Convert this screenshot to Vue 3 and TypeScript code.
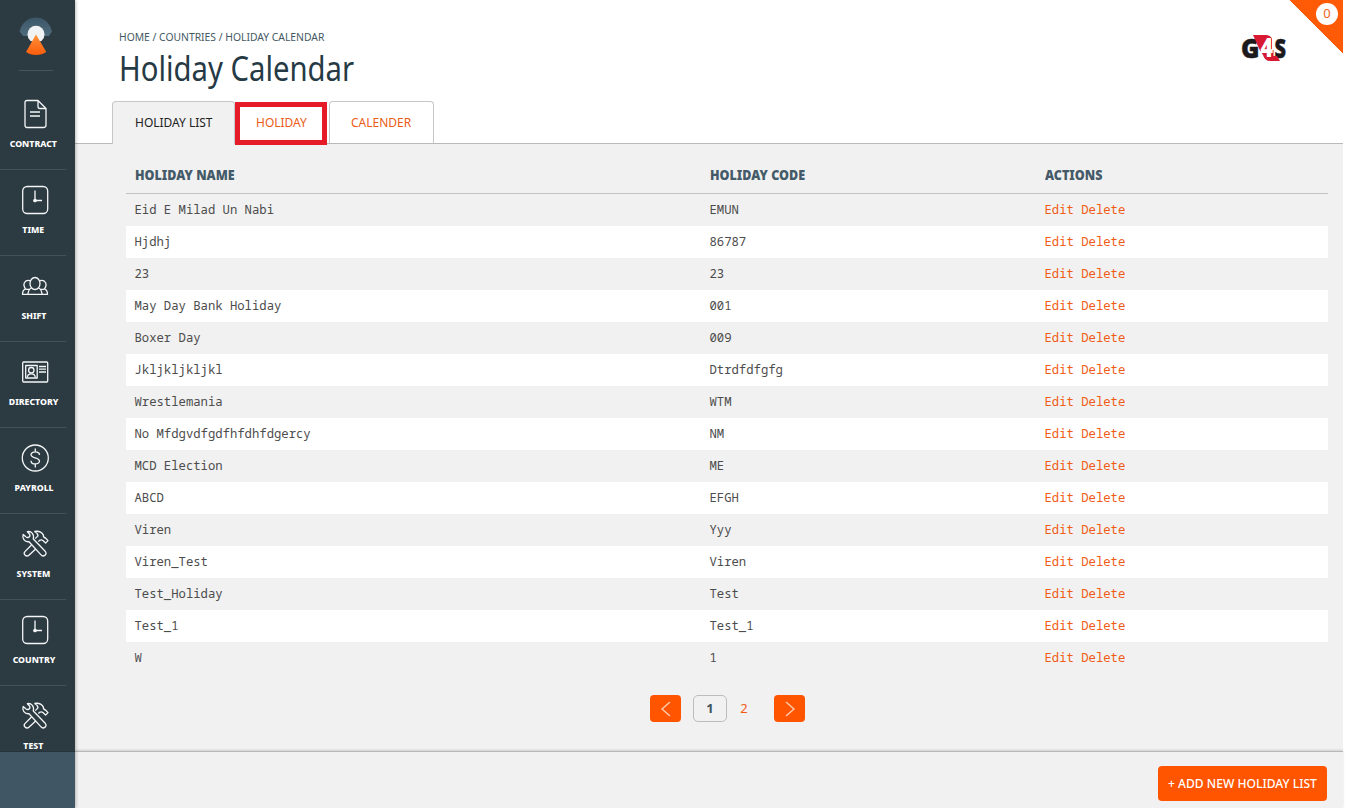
<script setup lang="ts">
interface NavItem {
  label: string
  icon: 'contract' | 'clock' | 'people' | 'card' | 'dollar' | 'tools'
}

interface Holiday {
  name: string
  code: string
}

const navItems: NavItem[] = [
  { label: 'CONTRACT', icon: 'contract' },
  { label: 'TIME', icon: 'clock' },
  { label: 'SHIFT', icon: 'people' },
  { label: 'DIRECTORY', icon: 'card' },
  { label: 'PAYROLL', icon: 'dollar' },
  { label: 'SYSTEM', icon: 'tools' },
  { label: 'COUNTRY', icon: 'clock' },
  { label: 'TEST', icon: 'tools' },
]

const holidays: Holiday[] = [
  { name: 'Eid E Milad Un Nabi', code: 'EMUN' },
  { name: 'Hjdhj', code: '86787' },
  { name: '23', code: '23' },
  { name: 'May Day Bank Holiday', code: '001' },
  { name: 'Boxer Day', code: '009' },
  { name: 'Jkljkljkljkl', code: 'Dtrdfdfgfg' },
  { name: 'Wrestlemania', code: 'WTM' },
  { name: 'No Mfdgvdfgdfhfdhfdgercy', code: 'NM' },
  { name: 'MCD Election', code: 'ME' },
  { name: 'ABCD', code: 'EFGH' },
  { name: 'Viren', code: 'Yyy' },
  { name: 'Viren_Test', code: 'Viren' },
  { name: 'Test_Holiday', code: 'Test' },
  { name: 'Test_1', code: 'Test_1' },
  { name: 'W', code: '1' },
]
</script>

<template>
  <div class="page">
    <aside class="sidebar">
      <div class="brand">
        <svg class="brand-mark" width="34" height="40" viewBox="0 0 34 40">
          <defs>
            <linearGradient id="dome" x1="0" y1="0" x2="0" y2="1">
              <stop offset="0" stop-color="#3b5668" />
              <stop offset="1" stop-color="#4f6c7d" />
            </linearGradient>
            <linearGradient id="beam" x1="0" y1="0" x2="0" y2="1">
              <stop offset="0" stop-color="#ff9238" />
              <stop offset="1" stop-color="#fb5c0c" />
            </linearGradient>
          </defs>
          <path d="M4.200 20L.5 15.500C3 6 9.500 1.500 17 1.500S30.500 6 33 15.500L29.800 20Z" fill="url(#dome)" />
          <circle cx="17" cy="18.300" r="8.500" fill="#f1f2f3" />
          <path d="M17 18.500L27.300 36Q23 39 17 39T7 36Z" fill="url(#beam)" />
        </svg>
      </div>
      <nav>
        <a v-for="item in navItems" :key="item.label" class="nav-item">
          <svg class="nav-icon" width="30" height="32" viewBox="0 0 30 32">
            <template v-if="item.icon === 'contract'">
              <path d="M7 2.500H18L26 10.500V27Q26 29.500 23.500 29.500H7Q5 29.500 5 27V4.500Q5 2.500 7 2.500ZM18 2.500V8.500Q18 10.500 20 10.500H26M10 14H20M10 18H20" />
            </template>
            <template v-else-if="item.icon === 'clock'">
              <rect x="2.700" y="2.500" width="25" height="27" rx="4.500" />
              <path d="M15 6.500V16.500H22" />
              <circle cx="15" cy="16.500" r="1.200" class="solid" />
            </template>
            <template v-else-if="item.icon === 'people'">
              <ellipse cx="15" cy="13.500" rx="5" ry="6" />
              <path d="M11.500 18Q8.200 19.500 8 24.300H22Q21.800 19.500 18.500 18" />
              <path d="M10 10.700C5 9.500 2 14 5.500 18.800Q2.500 20 2.500 24.300H8M20 10.700C25 9.500 28 14 24.500 18.800Q27.500 20 27.500 24.300H22M5.500 18.800Q7.500 19.800 9.500 19.200M24.500 18.800Q22.500 19.800 20.500 19.200" />
            </template>
            <template v-else-if="item.icon === 'card'">
              <rect x="2.700" y="6" width="25" height="20" rx="1" />
              <rect x="5.700" y="9.500" width="11.500" height="12.500" />
              <circle cx="11.300" cy="14.200" r="2.700" />
              <path d="M7.300 21.500Q7.500 17.800 11.300 17.800T15.300 21.500M19 10.500H26M19 13.200H26M19 16H26" />
            </template>
            <template v-else-if="item.icon === 'dollar'">
              <circle cx="15.300" cy="16" r="13" />
              <path d="M15.300 6.500V10M15.300 22V25.500M19.500 13C19.500 9 11 9 11 12.700C11 16.500 19.500 15 19.500 19C19.500 23 11 23 11 18.700" />
            </template>
            <template v-else>
              <path d="M7.400 3.700L9.700 6.200Q10.500 8.300 8.700 9.300Q6.500 10 5.500 8.500L3.200 6.400C1.800 9.800 4.500 14.300 9 13.700L20.800 26.600Q22.600 29 24.800 27.400Q27.100 25.500 25.200 23.300L13.300 11C14.400 5.800 11.100 2.800 7.400 3.700Z" />
              <path d="M14.300 3.500Q20.500 2.300 23.300 6.800Q23 9.500 25.500 10L28 12.600L25.600 15.100L22.900 12.600Q21.500 11.300 19.500 12.400L18.400 13.700M15.200 10.600L18 7.900Q17.800 4.900 14.300 3.500M11.500 17L4.900 23.600Q3.400 25.300 5 27Q7 29 8.900 27.200L15.700 20.900" />
            </template>
          </svg>
          <span class="nav-label">{{ item.label }}</span>
        </a>
      </nav>
      <div class="sidebar-foot"></div>
    </aside>

    <main class="main">
      <header class="header">
        <div class="heading">
          <div class="crumbs"><span>HOME / COUNTRIES / HOLIDAY CALENDAR</span></div>
          <h1><span>Holiday Calendar</span></h1>
        </div>
        <svg class="company" width="46" height="28" viewBox="0 0 46 28">
          <text x="0" y="23.500" textLength="18.500" lengthAdjust="spacingAndGlyphs" class="mark">G</text>
          <text x="33.500" y="23.500" textLength="11.500" lengthAdjust="spacingAndGlyphs" class="mark">S</text>
          <path d="M12 1H25Q29 1 31 4.500V16H32.500V22H36L39 27H29Q24 27 22 21L18.500 15.500Z" fill="#d71932" />
          <text x="19.500" y="22.500" textLength="12.500" lengthAdjust="spacingAndGlyphs" class="mark four">4</text>
        </svg>
        <div class="corner"><span class="count">0</span></div>
        <div class="tabs">
          <a class="tab active"><span>HOLIDAY LIST</span></a>
          <a class="tab marked"><span>HOLIDAY</span></a>
          <a class="tab last"><span>CALENDER</span></a>
        </div>
      </header>

      <section class="content">
        <div class="row head">
          <span><b>HOLIDAY NAME</b></span>
          <span><b>HOLIDAY CODE</b></span>
          <span><b>ACTIONS</b></span>
        </div>
        <div v-for="holiday in holidays" :key="holiday.name" class="row">
          <span>{{ holiday.name }}</span>
          <span>{{ holiday.code }}</span>
          <span class="actions"><a>Edit</a> <a>Delete</a></span>
        </div>
        <div class="pager">
          <button class="arrow">
            <svg width="12" height="18" viewBox="0 0 12 18"><path d="M10 2L2 9L10 16" /></svg>
          </button>
          <span class="current">1</span>
          <a class="next-page">2</a>
          <button class="arrow">
            <svg width="12" height="18" viewBox="0 0 12 18"><path d="M2 2L10 9L2 16" /></svg>
          </button>
        </div>
      </section>

      <footer class="footer">
        <button class="add"><span>+ ADD NEW HOLIDAY LIST</span></button>
      </footer>
    </main>
  </div>
</template>

<style>
body {
  margin: 0;
  overflow: hidden;
  background: #fff;
}
</style>

<style scoped>
* {
  box-sizing: border-box;
}

.page {
  display: flex;
  width: 1345px;
  height: 808px;
  font-family: "Noto Sans", "Open Sans", sans-serif;
  color: #263a45;
}

.sidebar {
  display: flex;
  flex-direction: column;
  width: 75px;
  height: 808px;
  background: #2c3a42;
  box-shadow: 1px 0 3px rgba(0, 0, 0, 0.250);
  z-index: 2;
  overflow: hidden;
}

.brand {
  flex: none;
  width: 34px;
  height: 71px;
  margin-left: 18.500px;
  padding-top: 16px;
  border-bottom: 1px solid #46545c;
}

.brand-mark {
  display: block;
}

nav {
  height: 680px;
  padding-top: 13px;
  overflow: hidden;
}

.nav-item {
  display: flex;
  flex-direction: column;
  align-items: center;
  width: 66px;
  height: 86px;
  padding-top: 14px;
  padding-left: 1px;
  border-bottom: 1px solid #42515a;
}

.nav-icon {
  flex: none;
  margin-left: 3px;
  fill: none;
  stroke: #f4f6f7;
  stroke-width: 1.300;
  stroke-linejoin: round;
}

.nav-icon .solid {
  fill: #fff;
}

.nav-label {
  margin-top: 7px;
  margin-left: 0.500px;
  font-size: 9px;
  line-height: 14px;
  font-weight: 800;
  color: #fff;
  transform: scaleX(0.970);
}

.sidebar-foot {
  flex: none;
  height: 57px;
  background: #405665;
  border-top: 1px solid #26333a;
}

.main {
  display: flex;
  flex-direction: column;
  width: 1268px;
  background: #f1f1f1;
}

.header {
  position: relative;
  height: 144px;
  background: #fff;
  border-bottom: 1px solid #b9b9b9;
}

.heading {
  padding: 29px 0 0 44px;
}

.crumbs {
  height: 16px;
  font-size: 11px;
  line-height: 16px;
  color: #455963;
}

.crumbs span {
  transform: scaleX(0.940);
}

h1 {
  margin: 0;
  height: 46px;
  font-size: 34px;
  line-height: 46px;
  font-weight: 400;
}

h1 span {
  transform: scaleX(0.861);
}

h1 span,
.crumbs span,
.tab span,
.row b,
.add span {
  display: inline-block;
  white-space: nowrap;
  transform-origin: 0 50%;
}

.tab span {
  transform: scaleX(0.922);
}

.company {
  position: absolute;
  left: 1166px;
  top: 34px;
  overflow: visible;
}

.mark {
  font: 800 27px "Open Sans", sans-serif;
  fill: #1b191b;
  stroke: #1b191b;
  stroke-width: 0.500;
}

.mark.four {
  fill: #fff;
  stroke: none;
}

.corner {
  position: absolute;
  top: 0;
  right: 0;
  width: 53px;
  height: 53px;
  background: linear-gradient(45deg, transparent 50%, #ff5a05 50%);
}

.count {
  position: absolute;
  top: 3px;
  right: 5px;
  width: 22px;
  height: 22px;
  border-radius: 50%;
  background: #fff;
  color: #f06420;
  font-size: 13px;
  line-height: 21px;
  text-align: center;
}

.tabs {
  display: flex;
  height: 43px;
  margin: 10px 0 0 37px;
}

.tab {
  height: 42px;
  border: 1px solid #c7c7c7;
  border-bottom: 0;
  border-radius: 4px 4px 0 0;
  font-size: 13px;
  line-height: 40px;
  color: #ec5c16;
  background: #fff;
}

.active {
  width: 123px;
  height: 43px;
  padding-left: 21.500px;
  color: #222;
  background: #f1f1f1;
}

.marked {
  width: 92px;
  height: 43px;
  margin-top: 1px;
  padding-left: 16px;
  border: 5px solid #e51c28;
  border-radius: 0;
  line-height: 30px;
  z-index: 1;
}

.last {
  width: 105px;
  margin-left: 2px;
  padding-left: 21px;
}

.content {
  height: 607px;
  padding: 12px 15px 0 51px;
}

.row {
  display: grid;
  grid-template-columns: 575px 335px 1fr;
  height: 32px;
  padding-left: 8.500px;
  line-height: 32px;
  font-family: "Noto Sans Mono", "DejaVu Sans Mono", monospace;
  font-size: 12.240px;
  color: #4c4c4c;
}

.row:nth-child(odd) {
  background: #fff;
}

.row.head {
  height: 38px;
  background: none;
  border-bottom: 1px solid #c3c3c3;
  font: 700 13.500px / 39px "Noto Sans", sans-serif;
  color: #445a68;
}

.row b {
  transform: scaleX(0.927);
}

.actions a {
  color: #f05c14;
}

.pager {
  display: flex;
  align-items: center;
  height: 27px;
  margin: 21px 0 0 524px;
}

.arrow {
  display: flex;
  align-items: center;
  justify-content: center;
  width: 31px;
  height: 27px;
  padding: 0;
  border: 0;
  border-radius: 4px;
  background: #ff5400;
}

.arrow path {
  fill: none;
  stroke: #ffc9a8;
  stroke-width: 1.500;
}

.current {
  width: 34px;
  height: 27px;
  margin-left: 12px;
  border: 1px solid #bcbcbc;
  border-radius: 5px;
  font-size: 13px;
  font-weight: 700;
  line-height: 25px;
  text-align: center;
  color: #3f5562;
}

.next-page {
  width: 34px;
  height: 27px;
  margin-right: 13px;
  font-size: 13px;
  line-height: 27px;
  text-align: center;
  color: #f05c14;
}

.footer {
  display: flex;
  justify-content: flex-end;
  height: 57px;
  padding: 14px 16px 0 0;
  border-top: 1px solid #b8b8b8;
  box-shadow: 0 -1px 2px rgba(0, 0, 0, 0.150);
}

.add {
  width: 169px;
  height: 35px;
  padding: 0 0 2px 10px;
  border: 0;
  border-radius: 4px;
  background: #ff5400;
  color: #fff;
  font: 500 13px "Noto Sans", sans-serif;
  text-align: left;
}

.add span {
  width: 150px;
  transform: scaleX(0.930);
}
</style>
